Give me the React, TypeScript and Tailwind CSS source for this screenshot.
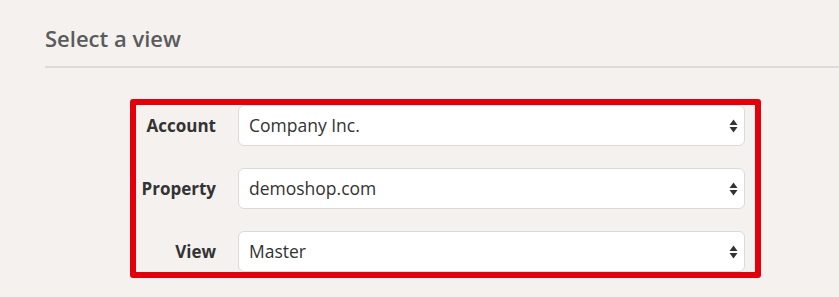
import { useState } from "react";

const FIELDS = [
	{ id: "account", label: "Account", options: ["Company Inc."] },
	{ id: "property", label: "Property", options: ["demoshop.com"] },
	{ id: "view", label: "View", options: ["Master"] },
];

function SortArrows() {
	return (
		<svg width="9" height="15" viewBox="0 0 9 15" className="pointer-events-none absolute right-[7px] top-1/2 -translate-y-1/2">
			<path d="M4.5 1 L8.5 6.5 L0.5 6.5 Z" fill="#333" />
			<path d="M4.5 14 L8.5 8.5 L0.5 8.5 Z" fill="#333" />
		</svg>
	);
}

export default function App() {
	const [values, setValues] = useState<Record<string, string>>(() =>
		Object.fromEntries(FIELDS.map((f) => [f.id, f.options[0]])),
	);

	return (
		<div
			className="h-[297px] w-[839px] overflow-hidden bg-[#f4f1ef] pl-[45px] pt-[24px]"
			style={{ fontFamily: '"Open Sans", "Liberation Sans", sans-serif' }}
		>
			<h2 className="text-[22px] font-semibold leading-[28px] text-[#5b5b5b]">Select a view</h2>
			<div className="mt-[14px] h-[2px] bg-[#dedcda]" />

			{/* highlighted form */}
			<div className="ml-[85px] mt-[31px] w-[631px] rounded-[3px] border-[6px] border-[#e3000b] py-0 pr-[10px]">
				<div className="grid grid-cols-[80px_1fr] items-center gap-x-[22px] gap-y-[22px]">
					{FIELDS.map((f) => (
						<div key={f.id} className="contents">
							<label htmlFor={f.id} className="whitespace-nowrap text-right text-[17px] font-bold text-[#333]">
								{f.label}
							</label>
							<div className="relative">
								<select
									id={f.id}
									value={values[f.id]}
									onChange={(e) => setValues((prev) => ({ ...prev, [f.id]: e.target.value }))}
									className="h-[41px] w-full appearance-none rounded-[6px] border border-[#dcdad8] bg-white pl-[10px] text-[17.5px] text-[#333] outline-none"
								>
									{f.options.map((o) => (
										<option key={o}>{o}</option>
									))}
								</select>
								<SortArrows />
							</div>
						</div>
					))}
				</div>
			</div>
		</div>
	);
}
